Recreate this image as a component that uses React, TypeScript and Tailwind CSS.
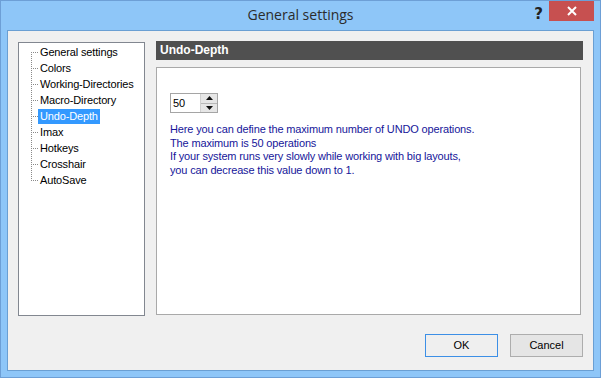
import React from "react";

const treeItems = [
  "General settings",
  "Colors",
  "Working-Directories",
  "Macro-Directory",
  "Undo-Depth",
  "Imax",
  "Hotkeys",
  "Crosshair",
  "AutoSave",
];

function Connector({ first, last }: { first: boolean; last: boolean }) {
  const dots: React.ReactNode[] = [];
  const yStart = first ? 8 : 0;
  const yEnd = last ? 8 : 15;
  for (let y = yStart; y <= yEnd; y += 2) {
    dots.push(<rect key={"v" + y} x={0} y={y} width={1} height={1} fill="#8a8a8a" />);
  }
  for (let x = 2; x <= 6; x += 2) {
    dots.push(<rect key={"h" + x} x={x} y={8} width={1} height={1} fill="#8a8a8a" />);
  }
  return (
    <svg width="7" height="16" className="shrink-0 block">
      {dots}
    </svg>
  );
}

export default function App() {
  const ui = { fontFamily: '"Liberation Sans", Arial, sans-serif' };
  return (
    <div
      className="w-[601px] h-[378px] bg-[#8ec6f8] border border-[#6d9fd6] flex flex-col overflow-hidden relative"
      style={ui}
    >
      {/* Title bar */}
      <div className="h-[29px] shrink-0 grid grid-cols-[1fr_auto_1fr]">
        <div />
        <div
          className="pt-[4px] text-[14px] text-[#2b2b2b] leading-[20px]"
          style={{ fontFamily: '"Open Sans", "Noto Sans", sans-serif' }}
        >
          General settings
        </div>
        <div className="flex justify-end items-start pr-[6px]">
          <div
            className="mt-[4px] mr-[6px] text-[15px] font-bold text-[#222] leading-[18px]"
            style={{ fontFamily: '"DejaVu Sans", sans-serif' }}
          >
            ?
          </div>
          <div className="w-[45px] h-[20px] bg-[#c75050] flex items-center justify-center">
            <svg width="10" height="10" viewBox="0 0 10 10">
              <path d="M1 1 L9 9 M9 1 L1 9" stroke="white" strokeWidth="2" />
            </svg>
          </div>
        </div>
      </div>

      {/* Client area */}
      <div className="ml-[6px] w-[587px] h-[341px] border border-[#6a9fd3] bg-[#f0f0f0] flex flex-col">
        <div className="h-[285px] flex pl-[10px] gap-[11px]">
          {/* Tree */}
          <div className="mt-[11px] w-[127px] h-[274px] border border-[#828790] bg-white pt-[1px] pl-[12px]">
            {treeItems.map((t, i) => (
              <div key={t} className="flex h-[16px] items-center">
                <Connector first={i === 0} last={i === treeItems.length - 1} />
                <span
                  className={
                    "text-[11px] tracking-[-0.15px] leading-[15px] px-[2px] whitespace-nowrap " +
                    (t === "Undo-Depth" ? "bg-[#3399ff] text-white" : "text-black")
                  }
                >
                  {t}
                </span>
              </div>
            ))}
          </div>

          {/* Right panel */}
          <div className="mt-[10px] flex flex-col">
            <div className="w-[427px] h-[19px] bg-[#505050] text-white font-bold text-[12px] leading-[19px] pl-[4px]">
              Undo-Depth
            </div>
            <div className="mt-[7px] w-[425px] h-[248px] border border-[#a9a9a9] bg-white pl-[13px] pt-[25px]">
              <div className="w-[48px] h-[20px] border border-[#a5a5a5] flex bg-white">
                <div className="flex-1 text-[11px] leading-[18px] pl-[2px] text-black">50</div>
                <div className="w-[17px] flex flex-col bg-[#e6e6e6] border-l border-[#d0d0d0]">
                  <div className="flex-1 flex items-center justify-center border-b border-[#b8b8b8]">
                    <svg width="7" height="4" viewBox="0 0 7 4">
                      <path d="M3.5 0 L7 4 L0 4 Z" fill="#111" />
                    </svg>
                  </div>
                  <div className="flex-1 flex items-center justify-center">
                    <svg width="7" height="4" viewBox="0 0 7 4">
                      <path d="M0 0 L7 0 L3.5 4 Z" fill="#111" />
                    </svg>
                  </div>
                </div>
              </div>
              <div className="mt-[10px] text-[11px] tracking-[-0.15px] leading-[13.5px] text-[#16169a]">
                <div>Here you can define the maximum number of UNDO operations.</div>
                <div>The maximum is 50 operations</div>
                <div>If your system runs very slowly while working with big layouts,</div>
                <div>you can decrease this value down to 1.</div>
              </div>
            </div>
          </div>
        </div>

        {/* Buttons */}
        <div className="mt-[18px] flex justify-end gap-[12px] pr-[10px]">
          <button className="w-[73px] h-[23px] border border-[#3c8fe6] bg-[#efefef] text-[11px] text-black">
            OK
          </button>
          <button className="w-[73px] h-[23px] border border-[#adadad] bg-[#e5e5e5] text-[11px] text-black">
            Cancel
          </button>
        </div>
      </div>
    </div>
  );
}
